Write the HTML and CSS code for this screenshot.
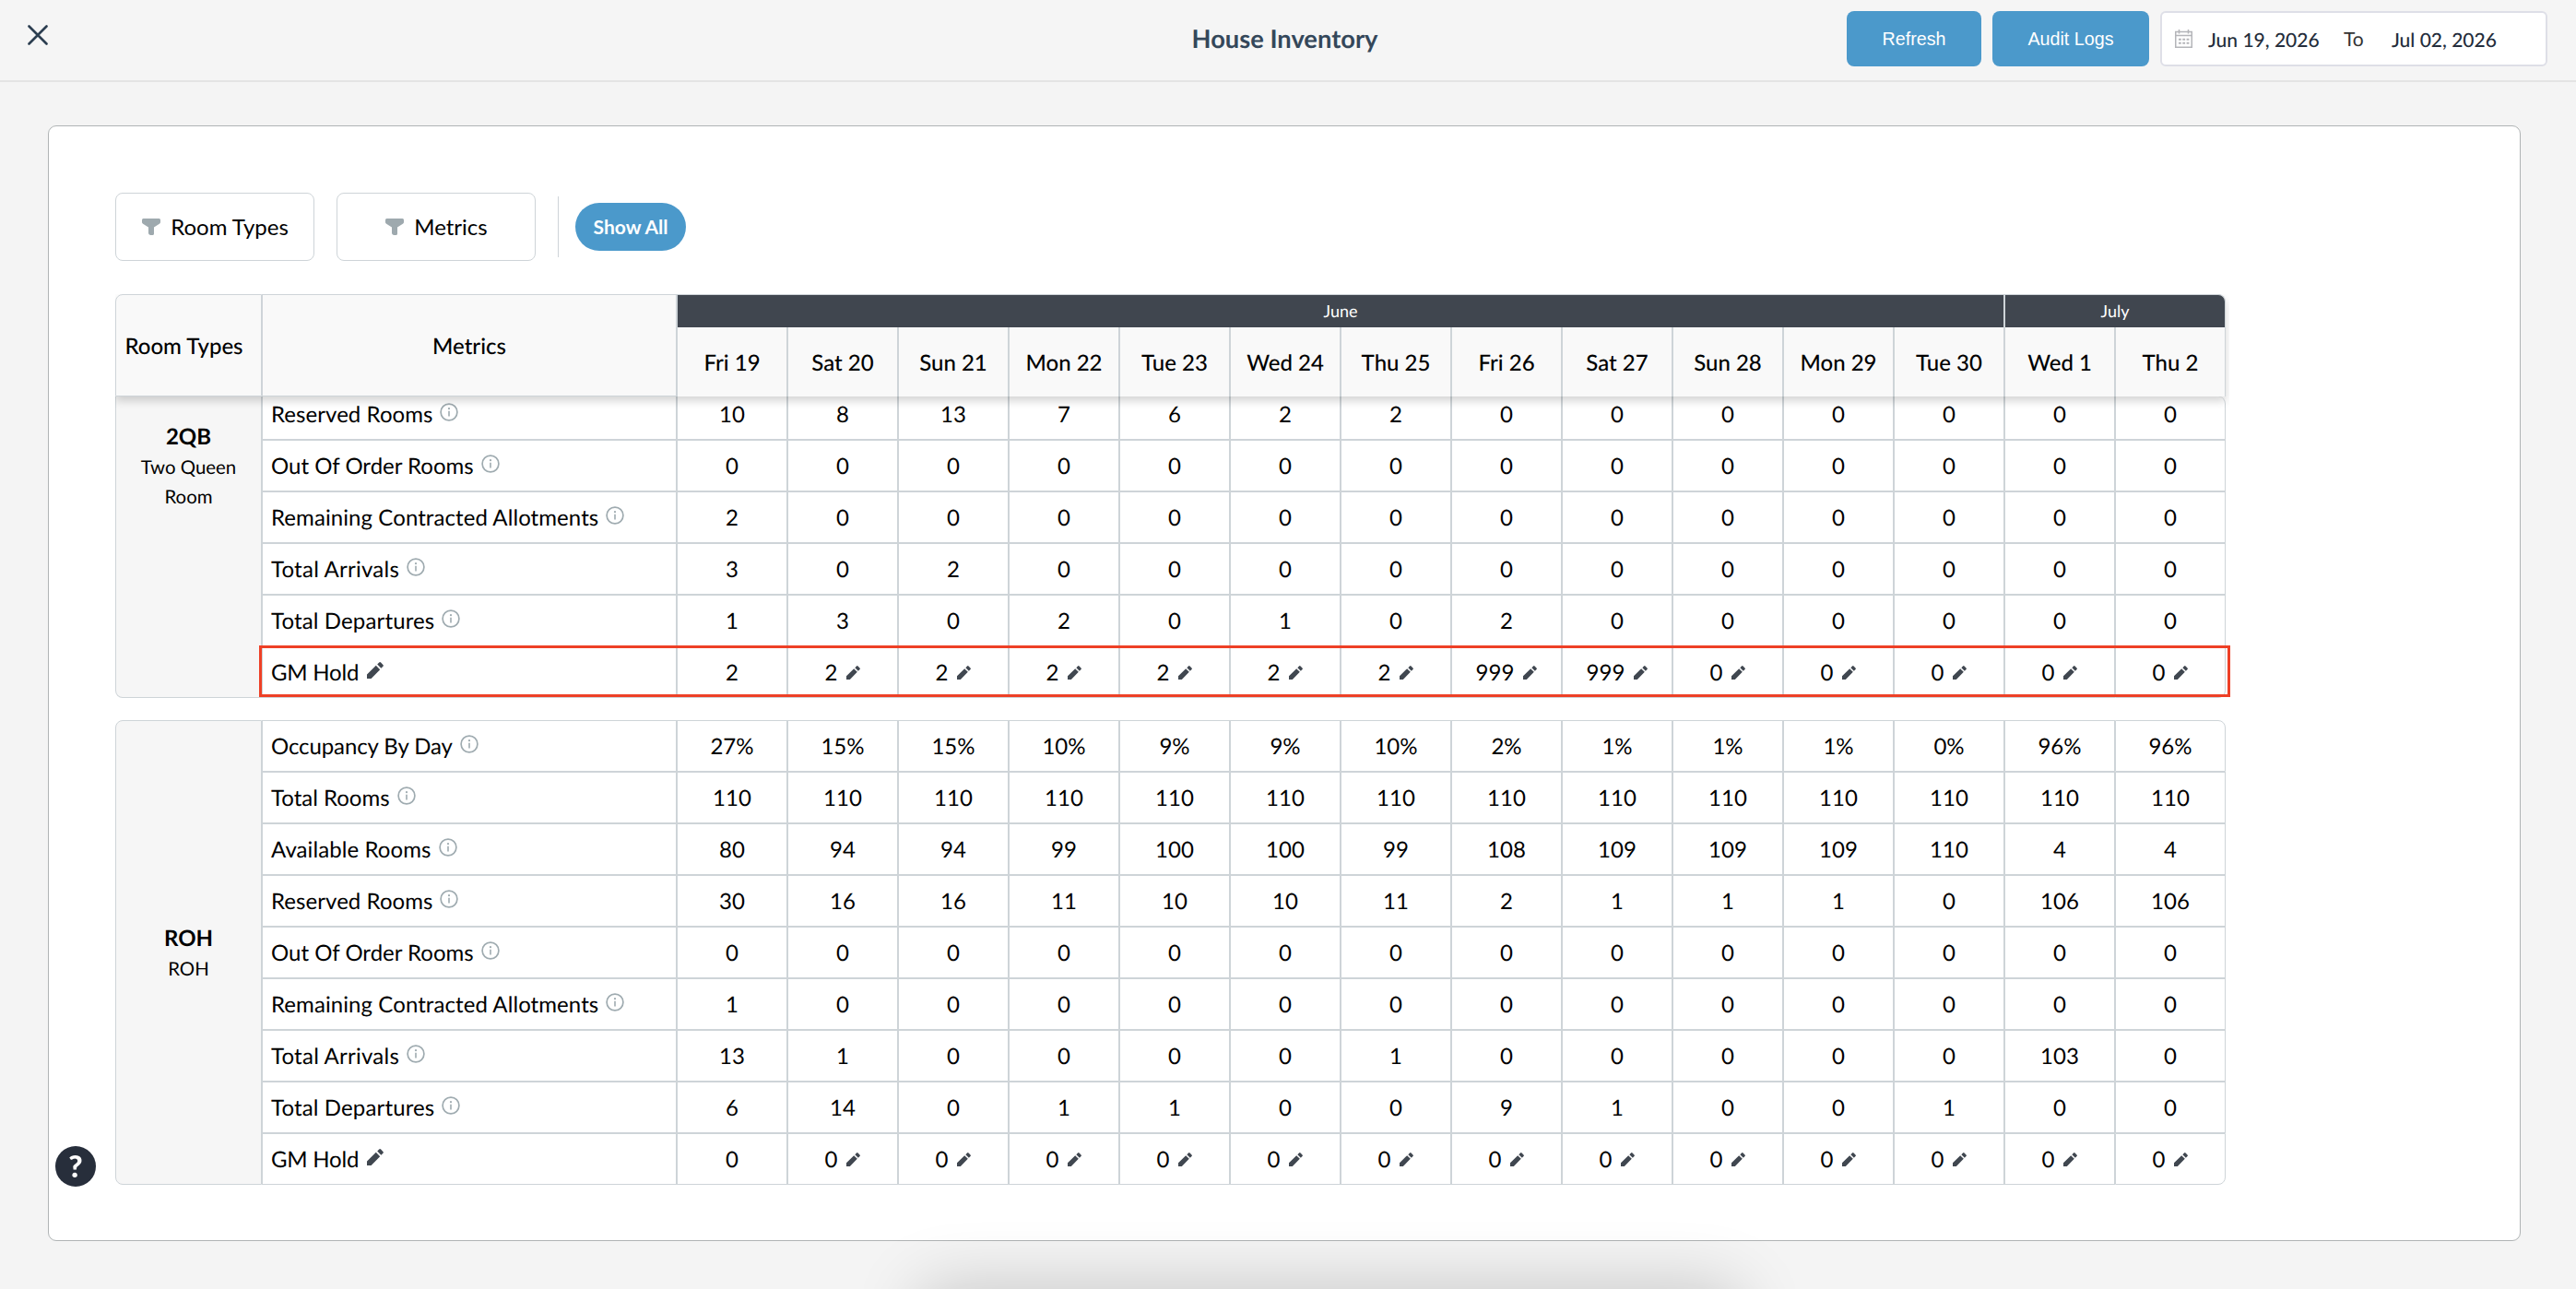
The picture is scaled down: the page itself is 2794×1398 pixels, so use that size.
FILE: index.html
```html
<!DOCTYPE html>
<html lang="en">
<head>
<meta charset="utf-8">
<title>House Inventory</title>
<link rel="stylesheet" href="styles.css">
</head>
<body>
<svg class="sprite" aria-hidden="true">
  <symbol id="info" viewBox="0 0 20 20"><circle cx="10" cy="10" r="8.9" fill="none" stroke="#9fabb0" stroke-width="1.7"/><path d="M10 8.8v5.6" stroke="#9fabb0" stroke-width="1.6"/><circle cx="10" cy="6.2" r="1.1" fill="#9fabb0"/></symbol>
  <symbol id="pencil" viewBox="0 0 18 18"><path fill="#404750" d="M0 18v-4.600L9.800 3.800l4.400 4.400L4.600 18zM11.200 2.600L13.200.600a1.300 1.300 0 0 1 1.900 0l2.300 2.300a1.300 1.300 0 0 1 0 1.900L15.400 6.800z"/></symbol>
  <symbol id="funnel" viewBox="0 0 20 18"><path fill="#9ea9ae" d="M1.500 0h17A1.500 1.500 0 0 1 20 1.500V4c0 .8-.4 1.400-1.100 1.800L13 9.500V16.500c0 .8-.6 1.500-1.400 1.500H9.500C8 18 7 17 7 15.600V9.500L1.100 5.800C.4 5.400 0 4.800 0 4V1.500A1.500 1.500 0 0 1 1.500 0z"/></symbol>
</svg>
<header class="topbar">
  <button class="close" aria-label="Close"><svg width="22" height="22" viewBox="0 0 22 22"><path d="M1.500 1.500l19 19M20.500 1.500l-19 19" stroke="#2c3e50" stroke-width="2.600" stroke-linecap="round"/></svg></button>
  <h1 class="title">House Inventory</h1>
  <div class="actions">
    <button class="btn btn-refresh">Refresh</button>
    <button class="btn btn-audit">Audit Logs</button>
    <div class="range">
      <svg width="19" height="20" viewBox="0 0 19 20" fill="none" stroke="#b4b5b9"><path d="M.75 2.500h17.500v16.700H.75zM.75 6.500h17.500" stroke-width="1.500"/><path d="M4.500 0v4.500M14.500 0v4.500" stroke-width="1.500"/><path d="M4 10.700h11.500M4 14.700h11.500" stroke-width="2" stroke-dasharray="2.800 1.500"/></svg>
      <span class="date from">Jun 19, 2026</span>
      <span class="to">To</span>
      <span class="date until">Jul 02, 2026</span>
    </div>
  </div>
</header>
<main class="card">
  <div class="filters">
    <button class="filter"><svg width="20" height="18"><use href="#funnel"/></svg><span>Room Types</span></button>
    <button class="filter"><svg width="20" height="18"><use href="#funnel"/></svg><span>Metrics</span></button>
    <span class="divider"></span>
    <button class="pill">Show All</button>
  </div>
  <section class="table">
    <div class="thead">
      <div class="th side-head">Room Types</div>
      <div class="th metric-head">Metrics</div>
      <div class="calendar">
        <div class="month june">June</div>
        <div class="month july">July</div>
      </div>
    </div>
    <div class="block block-first">
      <div class="side"><strong>2QB</strong><span>Two Queen Room</span></div>
      <div class="rows" id="rows-2qb"></div>
      <div class="highlight"></div>
    </div>
    <div class="block">
      <div class="side"><strong>ROH</strong><span>ROH</span></div>
      <div class="rows" id="rows-roh"></div>
    </div>
  </section>
</main>
<button class="help" aria-label="Help">?</button>
<div class="dock-shadow"></div>
<script src="app.js"></script>
</body>
</html>
```
FILE: styles.css
```css
* { box-sizing: border-box; }
html, body { height: 100%; }
body {
  margin: 0;
  background: #f4f4f4;
  font-family: Lato, "Liberation Sans", sans-serif;
  font-size: 24px;
  line-height: 28px;
  color: #000;
  overflow: hidden;
  text-rendering: geometricPrecision;
}
button { font: inherit; color: inherit; border: 0; padding: 0; background: none; }
svg { display: block; flex: none; }
.sprite { display: none; }

.topbar {
  display: grid;
  grid-template-columns: 1fr auto 1fr;
  height: 89px;
  background: #f5f5f5;
  border-bottom: 2px solid #e4e4e4;
}
.close { justify-self: start; align-self: start; margin: 27px 0 0 30px; }
.title {
  margin: 0;
  padding: 25px 7px 0 0;
  font-size: 27.3px;
  line-height: 34px;
  font-weight: 700;
  color: #34475a;
}
.actions { justify-self: end; display: flex; gap: 12px; padding: 12px 31px 0 0; height: 72px; }
.btn {
  height: 60px;
  border-radius: 8px;
  background: #4b99cb;
  color: #fff;
  font: 19.7px "Liberation Sans", Arial, sans-serif;
}
.btn-refresh { width: 146px; }
.btn-audit { width: 170px; }
.range {
  display: flex;
  align-items: center;
  width: 420px;
  height: 60px;
  padding-left: 14px;
  background: #fff;
  border: 2px solid #dedfe7;
  border-radius: 6px;
  font-size: 21px;
  line-height: 26px;
}
.date { color: #242d3b; font-weight: 500; padding-top: 3px; }
.from { margin-left: 17px; width: 147px; }
.to { color: #333; width: 52px; padding-top: 1px; }

.card {
  width: 2682px;
  height: 1210px;
  margin: 47px 0 0 52px;
  padding: 72px;
  background: #fff;
  border: 1px solid #b0b4b5;
  border-radius: 9px;
}
.filters { display: flex; align-items: center; height: 74px; }
.filter {
  display: flex;
  align-items: center;
  justify-content: center;
  gap: 11px;
  width: 216px;
  height: 74px;
  margin-right: 24px;
  padding-left: 1px;
  border: 1px solid #ced4d8;
  border-radius: 8px;
}
.divider { width: 1px; height: 66px; background: #ced4d8; margin-right: 18px; }
.pill {
  width: 120px;
  height: 52px;
  border-radius: 26px;
  background: #4b99cb;
  color: #fff;
  font-size: 21px;
  font-weight: 700;
}

.table { width: 2289px; margin-top: 36px; }
.thead {
  position: relative;
  z-index: 1;
  display: grid;
  grid-template-columns: 159px 450px 1680px;
  height: 111px;
  background: #f9f9f9;
  border-radius: 8px 8px 0 0;
  box-shadow: 0 5px 10px rgba(0, 0, 0, .17);
  clip-path: inset(0 -4px -20px 0);
}
.th {
  display: flex;
  align-items: center;
  justify-content: center;
  padding-top: 2px;
  border: 1px solid #ced4d8;
  font-weight: 500;
}
.side-head { border-top-left-radius: 8px; padding-right: 10px; }
.calendar {
  display: grid;
  grid-template-columns: repeat(14, 120px);
  grid-template-rows: 36px 75px;
}
.month {
  display: flex;
  align-items: center;
  justify-content: center;
  background: #40464f;
  border: 1px solid #ced4d8;
  border-bottom: 0;
  padding-bottom: 2px;
  color: #fff;
  font-size: 18px;
}
.june { grid-column: span 12; }
.july { grid-column: span 2; border-top-right-radius: 8px; }
.day {
  display: flex;
  align-items: center;
  justify-content: center;
  padding-top: 2px;
  border: solid #ced4d8;
  border-width: 0 1px;
  font-weight: 500;
}

.block {
  position: relative;
  display: grid;
  grid-template-columns: 159px 1fr;
  border-radius: 8px;
}
.block + .block { margin-top: 24px; }
.side {
  display: flex;
  flex-direction: column;
  align-items: center;
  justify-content: center;
  padding: 2px 20px 0;
  background: #f6f6f6;
  border: 1px solid #ced4d8;
  border-radius: 8px 0 0 8px;
  text-align: center;
  font-size: 20.4px;
  line-height: 32px;
}
.side strong { font-size: 24px; line-height: 34px; }
.row { display: grid; grid-template-columns: 450px repeat(14, 120px); height: 56px; }
.label, .cell { display: flex; align-items: center; border: 1px solid #ced4d8; background: #fff; padding-top: 1px; }
.label { padding-left: 9px; gap: 8px; }
.label svg { margin-bottom: 5px; }
.label.hold { gap: 9px; }
.cell { justify-content: center; gap: 10px; }
.cell svg { margin-bottom: 1px; }
.row:first-child .cell:last-child { border-top-right-radius: 8px; }
.row:last-child .cell:last-child { border-bottom-right-radius: 8px; }

.block-first .side { justify-content: flex-start; padding-top: 27px; border-top: 0; border-top-left-radius: 0; }
.block-first .row:first-child { height: 47px; }
.block-first .row:first-child > div { border-top: 0; border-radius: 0; padding-top: 0; padding-bottom: 7px; }
.highlight {
  position: absolute;
  left: 156px;
  bottom: 1px;
  width: 2138px;
  height: 56px;
  border: 3px solid #ee4026;
}

.help {
  position: fixed;
  left: 60px;
  top: 1243px;
  width: 44px;
  height: 44px;
  padding-bottom: 2px;
  border-radius: 50%;
  background: #272e3b;
  color: #fff;
  font-size: 33px;
  font-weight: 900;
  line-height: 41px;
}
.dock-shadow {
  position: fixed;
  left: 1000px;
  top: 1398px;
  width: 884px;
  height: 100px;
  box-shadow: 0 0 76px rgba(0, 0, 0, .2);
}
```
FILE: app.js
```js
const days = ['Fri 19', 'Sat 20', 'Sun 21', 'Mon 22', 'Tue 23', 'Wed 24', 'Thu 25',
  'Fri 26', 'Sat 27', 'Sun 28', 'Mon 29', 'Tue 30', 'Wed 1', 'Thu 2'];

const data = {
  'rows-2qb': [
    ['Reserved Rooms', '10 8 13 7 6 2 2 0 0 0 0 0 0 0'],
    ['Out Of Order Rooms', '0 0 0 0 0 0 0 0 0 0 0 0 0 0'],
    ['Remaining Contracted Allotments', '2 0 0 0 0 0 0 0 0 0 0 0 0 0'],
    ['Total Arrivals', '3 0 2 0 0 0 0 0 0 0 0 0 0 0'],
    ['Total Departures', '1 3 0 2 0 1 0 2 0 0 0 0 0 0'],
    ['GM Hold', '2 2 2 2 2 2 2 999 999 0 0 0 0 0']
  ],
  'rows-roh': [
    ['Occupancy By Day', '27% 15% 15% 10% 9% 9% 10% 2% 1% 1% 1% 0% 96% 96%'],
    ['Total Rooms', '110 110 110 110 110 110 110 110 110 110 110 110 110 110'],
    ['Available Rooms', '80 94 94 99 100 100 99 108 109 109 109 110 4 4'],
    ['Reserved Rooms', '30 16 16 11 10 10 11 2 1 1 1 0 106 106'],
    ['Out Of Order Rooms', '0 0 0 0 0 0 0 0 0 0 0 0 0 0'],
    ['Remaining Contracted Allotments', '1 0 0 0 0 0 0 0 0 0 0 0 0 0'],
    ['Total Arrivals', '13 1 0 0 0 0 1 0 0 0 0 0 103 0'],
    ['Total Departures', '6 14 0 1 1 0 0 9 1 0 0 1 0 0'],
    ['GM Hold', '0 0 0 0 0 0 0 0 0 0 0 0 0 0']
  ]
};

const tracking = {
  'Reserved Rooms': 0.06,
  'Remaining Contracted Allotments': 0.08,
  'Total Arrivals': 0.24,
  'Total Departures': 0.14,
  'Available Rooms': 0.09,
  'Occupancy By Day': -0.1,
  'GM Hold': -0.2
};

const icon = (name, size) => `<svg width="${size}" height="${size}"><use href="#${name}"/></svg>`;

document.querySelector('.calendar').insertAdjacentHTML('beforeend',
  days.map(d => `<div class="day">${d}</div>`).join(''));

for (const [id, rows] of Object.entries(data)) {
  document.getElementById(id).innerHTML = rows.map(([label, values]) => {
    const hold = label === 'GM Hold';
    const cells = values.split(' ').map((v, i) =>
      `<div class="cell">${v}${hold && i > 0 ? icon('pencil', 15) : ''}</div>`).join('');
    return `<div class="row"><div class="label${hold ? ' hold' : ''}" style="letter-spacing:${tracking[label] || 0}px">${label}${hold ? icon('pencil', 18) : icon('info', 20)}</div>${cells}</div>`;
  }).join('');
}
```
